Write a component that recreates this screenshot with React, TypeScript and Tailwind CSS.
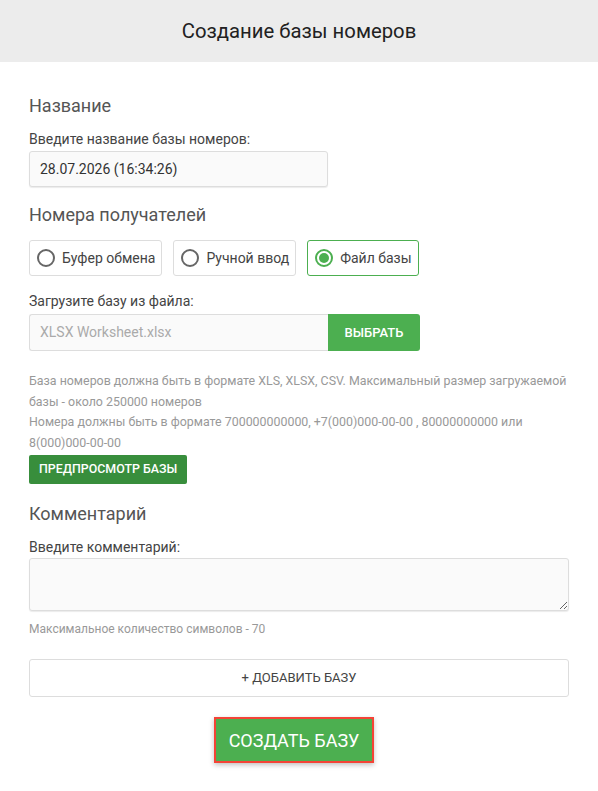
import { useState } from "react";

const modes = [
  { id: "clipboard", label: "Буфер обмена" },
  { id: "manual", label: "Ручной ввод" },
  { id: "file", label: "Файл базы" },
];

function Radio({ checked }: { checked: boolean }) {
  return (
    <span
      className={
        "flex h-[18px] w-[18px] shrink-0 items-center justify-center rounded-full border-2 " +
        (checked ? "border-[#4caf50]" : "border-[#666]")
      }
    >
      {checked && <span className="h-[10px] w-[10px] rounded-full bg-[#4caf50]" />}
    </span>
  );
}

export default function App() {
  const [mode, setMode] = useState("file");

  return (
    <div className="min-h-[791px] bg-white font-['Roboto',sans-serif] text-[#444]">
      <header className="flex h-[62px] items-center justify-center bg-[#ececec]">
        <h1 className="text-[20.3px] text-[#212121]">Создание базы номеров</h1>
      </header>

      <main className="px-[29px] pt-[30px] pb-[30px]">
        {/* Name */}
        <h2 className="text-[18px] leading-[28px] text-[#555]">Название</h2>
        <label className="mt-[9px] block text-[14px] leading-[20px] text-[#444]">
          Введите название базы номеров:
        </label>
        <input
          defaultValue="28.07.2026 (16:34:26)"
          className="mt-[2px] block h-[36px] w-[299px] rounded-[3px] border border-[#ddd] bg-[#fafafa] px-[10px] text-[14px] text-[#333] shadow-[0_1px_1px_rgba(0,0,0,0.08)] outline-none"
        />

        {/* Recipients */}
        <h2 className="mt-[14px] text-[18px] leading-[28px] text-[#555]">Номера получателей</h2>
        <div className="mt-[11px] flex gap-[11px]">
          {modes.map((m) => {
            const active = mode === m.id;
            return (
              <button
                key={m.id}
                onClick={() => setMode(m.id)}
                className={
                  "flex h-[36px] items-center gap-[7px] rounded-[3px] border pl-[7px] pr-[6px] text-[14px] text-[#444] " +
                  (active ? "border-[#4caf50]" : "border-[#ddd]")
                }
              >
                <Radio checked={active} />
                {m.label}
              </button>
            );
          })}
        </div>

        <label className="mt-[15px] block text-[14px] leading-[20px] text-[#444]">
          Загрузите базу из файла:
        </label>
        <div className="mt-[3px] flex h-[37px] w-[391px]">
          <div className="flex flex-1 items-center rounded-l-[3px] border border-r-0 border-[#ddd] bg-[#fafafa] px-[10px] text-[14px] text-[#aaa]">
            XLSX Worksheet.xlsx
          </div>
          <button className="w-[92px] rounded-r-[3px] bg-[#4caf50] text-[13px] font-medium text-white">
            ВЫБРАТЬ
          </button>
        </div>

        <p className="mt-[20px] text-[12.4px] leading-[20.5px] text-[#999]">
          База номеров должна быть в формате XLS, XLSX, CSV. Максимальный размер загружаемой базы -
          около 250000 номеров
          <br />
          Номера должны быть в формате 700000000000, +7(000)000-00-00 , 80000000000 или{" "}
          <span className="whitespace-nowrap">8(000)000-00-00</span>
        </p>
        <button className="mt-[2px] h-[29px] rounded-[2px] bg-[#388e3c] px-[10px] text-[12.4px] font-medium text-white">
          ПРЕДПРОСМОТР БАЗЫ
        </button>

        {/* Comment */}
        <h2 className="mt-[16px] text-[18px] leading-[28px] text-[#555]">Комментарий</h2>
        <label className="mt-[9px] block text-[14px] leading-[20px] text-[#444]">
          Введите комментарий:
        </label>
        <textarea className="mt-[1px] block h-[53px] w-full rounded-[3px] border border-[#ddd] bg-[#fafafa] px-[10px] py-[6px] text-[14px] shadow-[0_1px_1px_rgba(0,0,0,0.08)] outline-none" />
        <p className="mt-[9px] text-[12px] leading-[18px] text-[#999]">
          Максимальное количество символов - 70
        </p>

        <button className="mt-[21px] flex h-[38px] w-full items-center justify-center rounded-[3px] border border-[#ddd] bg-white text-[13px] text-[#444]">
          + ДОБАВИТЬ БАЗУ
        </button>

        <div className="mt-[20px] flex justify-center pr-[10px]">
          <button className="h-[46px] w-[160px] border-2 border-[#f44336] bg-[#4caf50] text-[18px] text-white shadow-[0_2px_5px_rgba(0,0,0,0.25)]">
            СОЗДАТЬ БАЗУ
          </button>
        </div>
      </main>
    </div>
  );
}
